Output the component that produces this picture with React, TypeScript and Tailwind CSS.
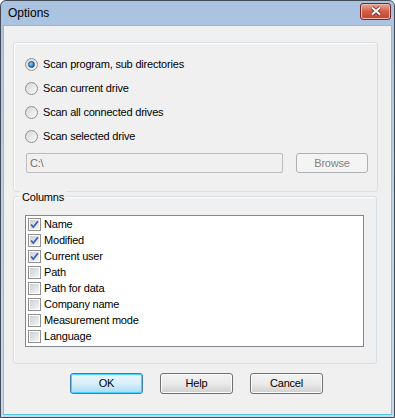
import React from 'react';

const radios = [
  { label: 'Scan program, sub directories', checked: true },
  { label: 'Scan current drive', checked: false },
  { label: 'Scan all connected drives', checked: false },
  { label: 'Scan selected drive', checked: false },
];

const columns = [
  { label: 'Name', checked: true },
  { label: 'Modified', checked: true },
  { label: 'Current user', checked: true },
  { label: 'Path', checked: false },
  { label: 'Path for data', checked: false },
  { label: 'Company name', checked: false },
  { label: 'Measurement mode', checked: false },
  { label: 'Language', checked: false },
];

function Radio({ checked }: { checked: boolean }) {
  return (
    <span className="w-[13px] h-[13px] rounded-full border border-[#8e8f8f] bg-gradient-to-br from-[#d6d6d6] to-[#fbfbfb] flex items-center justify-center shrink-0">
      {checked && (
        <span className="w-[7px] h-[7px] rounded-full bg-[radial-gradient(circle_at_35%_35%,#8fd3ff,#1d6fb8_70%)] border border-[#1c5180]" />
      )}
    </span>
  );
}

function Check({ checked }: { checked: boolean }) {
  return (
    <span className="w-[13px] h-[13px] border border-[#8f8f8f] bg-white p-px shrink-0 flex">
      <span className="flex-1 bg-gradient-to-br from-[#cbcfd5] to-[#f6f6f6] flex items-center justify-center">
        {checked && (
          <svg width="9" height="9" viewBox="0 0 9 9">
            <path d="M1 4.5 L3.3 7 L8 1.2" stroke="#4061b5" strokeWidth="1.8" fill="none" />
          </svg>
        )}
      </span>
    </span>
  );
}

function Button({ label, focused }: { label: string; focused?: boolean }) {
  return (
    <button
      className={
        focused
          ? 'w-[73px] h-[21px] rounded-[3px] border border-[#3c7fb1] bg-gradient-to-b from-[#eaf6fd] via-[#d9f0fc] to-[#a7d9f5] shadow-[inset_0_0_0_1px_#48d1ff] text-black'
          : 'w-[73px] h-[21px] rounded-[3px] border border-[#707070] bg-gradient-to-b from-[#f2f2f2] via-[#ebebeb] to-[#cfcfcf] shadow-[inset_0_0_0_1px_#fcfcfc] text-black'
      }
    >
      {label}
    </button>
  );
}

export default function App() {
  return (
    <div
      className="w-[395px] h-[418px] flex flex-col rounded-t-[6px] border border-[#454c57] bg-gradient-to-b from-[#a9c2df] via-[#bcd2eb] to-[#c4daf1] text-[11px] tracking-[-0.2px] text-black"
      style={{ fontFamily: '"Liberation Sans", Arial, sans-serif' }}
    >
      {/* title bar */}
      <div className="h-[24px] flex items-center justify-between pl-[7px] pr-[3px]">
        <span className="text-[12px] tracking-normal">Options</span>
        <span className="w-[31px] h-[17px] mt-[-4px] rounded-[3px] border border-[#6d2b27] bg-gradient-to-b from-[#e9a99a] via-[#d35c46] to-[#c3432d] shadow-[inset_0_0_0_1px_#f1b8ab] flex items-center justify-center">
          <svg width="12" height="10" viewBox="0 0 12 10">
            <path d="M2 1.5 L10 8.5 M10 1.5 L2 8.5" stroke="#5a2720" strokeWidth="3.6" />
            <path d="M2 1.5 L10 8.5 M10 1.5 L2 8.5" stroke="#ffffff" strokeWidth="2" />
          </svg>
        </span>
      </div>

      {/* client */}
      <div className="flex-1 mx-[2px] mb-[2px] border border-[#9db6d3] border-b-[#4ec6ea] bg-[#f0f0f0] flex flex-col px-[9px] pt-[16px]">
        {/* scan group */}
        <div className="w-[365px] rounded-[3px] border border-[#d5dfe5] shadow-[inset_1px_1px_0_#ffffff] pt-[9px] pb-[18px] pl-[11px]">
          {radios.map((r) => (
            <div key={r.label} className="h-[24px] flex items-center gap-[5px]">
              <Radio checked={r.checked} />
              <span>{r.label}</span>
            </div>
          ))}
          <div className="mt-[5px] flex items-center gap-[13px] pl-px">
            <div className="w-[257px] h-[20px] rounded-[2px] border border-[#bcbcbc] bg-[#f0f0f0] text-[#6d6d6d] pl-[3px] flex items-center">
              C:\
            </div>
            <div className="w-[72px] h-[20px] rounded-[3px] border border-[#adb2b5] bg-[#f4f4f4] text-[#838383] flex items-center justify-center">
              Browse
            </div>
          </div>
        </div>

        {/* columns group */}
        <div className="mt-[4px] w-[364px] rounded-[3px] border border-[#d5dfe5] shadow-[inset_1px_1px_0_#ffffff] pl-[11px] pb-[16px] relative">
          <span className="absolute left-[6px] top-[-8px] bg-[#f0f0f0] px-[2px]">Columns</span>
          <div className="mt-[18px] w-[339px] h-[132px] border border-[#828790] bg-white pl-[2px]">
            {columns.map((c) => (
              <div key={c.label} className="h-[16px] flex items-center gap-[3px]">
                <Check checked={c.checked} />
                <span>{c.label}</span>
              </div>
            ))}
          </div>
        </div>

        {/* buttons */}
        <div className="mt-[9px] flex justify-center gap-[17px] pr-[2px]">
          <Button label="OK" focused />
          <Button label="Help" />
          <Button label="Cancel" />
        </div>
      </div>
    </div>
  );
}
